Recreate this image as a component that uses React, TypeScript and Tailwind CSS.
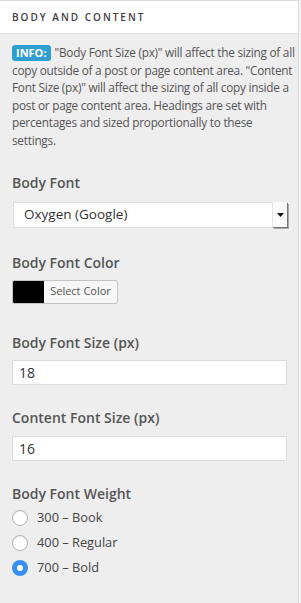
const font = { fontFamily: '"Open Sans", "Noto Sans", sans-serif' };

function Label({ children }: { children: React.ReactNode }) {
  return <div className="text-[14px] font-semibold leading-5 text-[#555]">{children}</div>;
}

function Radio({ label, checked }: { label: string; checked?: boolean }) {
  return (
    <label className="flex h-[25px] items-center gap-[9px]">
      {checked ? (
        <span className="flex h-4 w-4 items-center justify-center rounded-full bg-[#3b8ff0]">
          <span className="h-[6px] w-[6px] rounded-full bg-white" />
        </span>
      ) : (
        <span className="h-4 w-4 rounded-full border border-[#b4b4b4] bg-white shadow-[inset_0_1px_1px_rgba(0,0,0,0.08)]" />
      )}
      <span className="text-[12.8px] text-[#444]">{label}</span>
    </label>
  );
}

export default function App() {
  return (
    <div className="h-[603px] w-[301px] bg-[#f5f5f5]" style={font}>
      <div className="h-full w-[299px] border-r border-t border-[#dcdcdc] bg-[#eeeeee]">
        <div className="flex h-[33px] items-center border-b border-[#dcdcdc] bg-white pl-3">
          <span className="text-[10px] font-semibold tracking-[2px] text-[#3f3f3f]">BODY AND CONTENT</span>
        </div>

        <div className="px-3 pt-[10px]">
          <p className="w-[284px] text-[11.8px] leading-[17.6px] tracking-[-0.25px] text-[#555]">
            <span className="mr-[4px] inline-block rounded-[3px] bg-[#2e9fd0] px-[4px] text-[11px] font-bold leading-[16px] tracking-normal text-white">
              INFO:
            </span>
            "Body Font Size (px)" will affect the sizing of all
            <br />
            copy outside of a post or page content area. "Content
            <br />
            Font Size (px)" will affect the sizing of all copy inside a
            <br />
            post or page content area. Headings are set with
            <br />
            percentages and sized proportionally to these
            <br />
            settings.
          </p>

          <div className="mt-[23px]">
            <Label>Body Font</Label>
            <div className="ml-px mt-[9px] flex h-[26px] w-[275px] items-center border border-[#dedede] bg-white pl-[10px]">
              <span className="flex-1 text-[13.5px] text-[#333]">Oxygen (Google)</span>
              <span className="flex h-[25px] w-[15px] items-center justify-center border-l border-[#e4e4e4] bg-[#fafafa] shadow-[1px_1px_0_#777,2px_2px_0_#aaa]">
                <svg width="7" height="4" viewBox="0 0 7 4">
                  <path d="M0 0h7L3.5 4z" fill="#111" />
                </svg>
              </span>
            </div>
          </div>

          <div className="mt-[25px]">
            <Label>Body Font Color</Label>
            <div className="mt-[7px] flex h-[24px] w-[106px] overflow-hidden rounded-[2px] border border-[#c4c4c4] bg-[#f7f7f7]">
              <span className="w-[31px] bg-black" />
              <span className="flex flex-1 items-center justify-center text-[11px] text-[#555]">Select Color</span>
            </div>
          </div>

          <div className="mt-[29px]">
            <Label>Body Font Size (px)</Label>
            <div className="mt-[7px] flex h-[25px] w-[275px] items-center border border-[#dddddd] bg-white pl-[6px] text-[14px] text-[#333]">
              18
            </div>
          </div>

          <div className="mt-[23px]">
            <Label>Content Font Size (px)</Label>
            <div className="mt-[8px] flex h-[25px] w-[275px] items-center border border-[#dddddd] bg-white pl-[6px] text-[14px] text-[#333]">
              16
            </div>
          </div>

          <div className="mt-[23px]">
            <Label>Body Font Weight</Label>
            <div className="mt-[2px]">
              <Radio label="300 – Book" />
              <Radio label="400 – Regular" />
              <Radio label="700 – Bold" checked />
            </div>
          </div>
        </div>
      </div>
    </div>
  );
}
